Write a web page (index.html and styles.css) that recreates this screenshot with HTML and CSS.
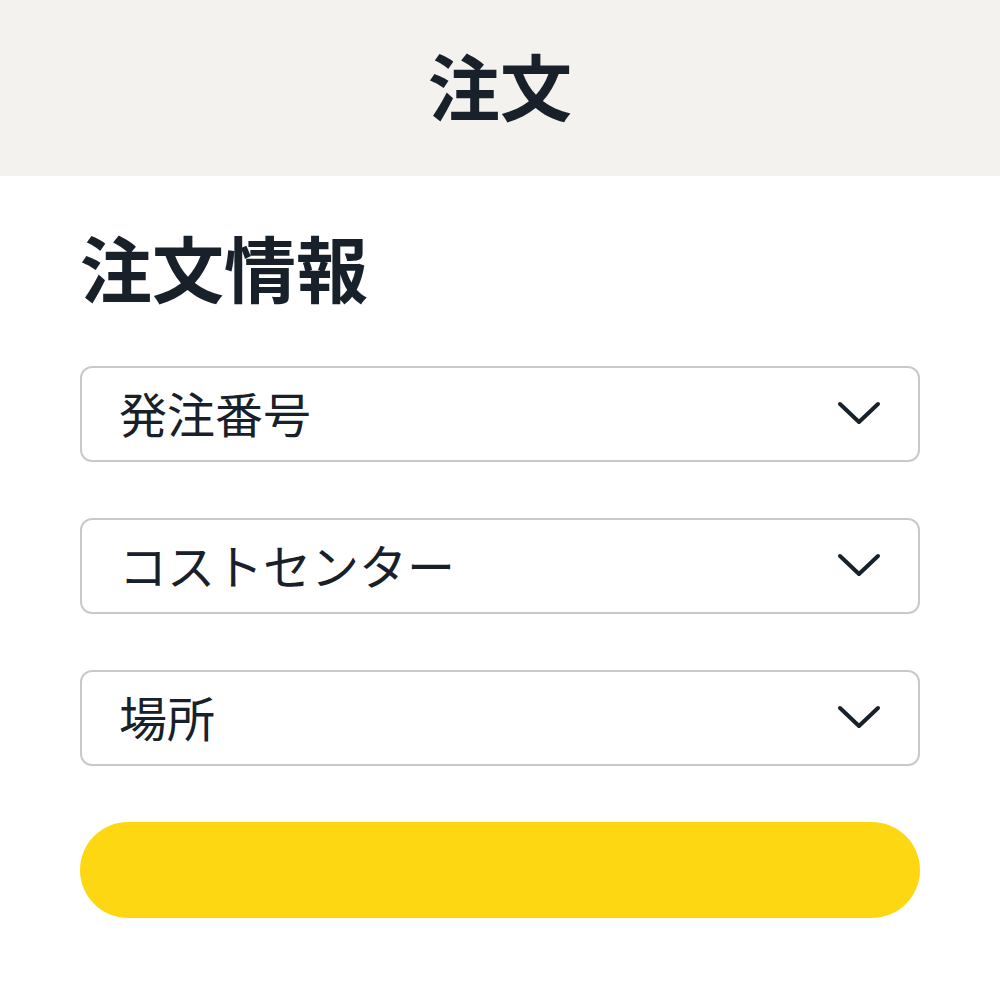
FILE: index.html
```html
<!DOCTYPE html>
<html>
<head>
  <title>注文</title>
  <link rel="stylesheet" href="styles.css">
</head>
<body>
  <div class="header">
    <h1>注文</h1>
  </div>
  <div class="order-container">
    <h2>注文情報</h2>
    <div class="select-box">
      <span>発注番号</span>
      <svg class="chevron" width="44" height="26" viewBox="0 0 44 26"><path d="M3 4 L22 22 L41 4" fill="none" stroke="#18202a" stroke-width="4" stroke-linecap="round" stroke-linejoin="round"/></svg>
    </div>
    <div class="select-box">
      <span>コストセンター</span>
      <svg class="chevron" width="44" height="26" viewBox="0 0 44 26"><path d="M3 4 L22 22 L41 4" fill="none" stroke="#18202a" stroke-width="4" stroke-linecap="round" stroke-linejoin="round"/></svg>
    </div>
    <div class="select-box">
      <span>場所</span>
      <svg class="chevron" width="44" height="26" viewBox="0 0 44 26"><path d="M3 4 L22 22 L41 4" fill="none" stroke="#18202a" stroke-width="4" stroke-linecap="round" stroke-linejoin="round"/></svg>
    </div>
    <button class="submit-button" type="button"></button>
  </div>
</body>
</html>
```

FILE: styles.css
```css
body {
  margin: 0;
  background-color: #ffffff;
  font-family: "Noto Sans CJK JP", "Noto Sans", sans-serif;
  color: #18202a;
}

.header {
  height: 176px;
  background-color: #f3f2ef;
  display: flex;
  justify-content: center;
  align-items: center;
}

.header h1 {
  margin: 0 0 8px 0;
  font-size: 72px;
  font-weight: 700;
  line-height: 1;
}

.order-container {
  padding: 0 80px;
  display: flex;
  flex-direction: column;
}

.order-container h2 {
  margin: 47px 0 57px 0;
  font-size: 72px;
  font-weight: 700;
  line-height: 86px;
}

.select-box {
  height: 96px;
  box-sizing: border-box;
  border: 2px solid #c9c9cd;
  border-radius: 12px;
  padding: 0 37px 0 37px;
  margin-bottom: 56px;
  display: flex;
  justify-content: space-between;
  align-items: center;
  font-size: 48px;
  line-height: 1;
}

.select-box span {
  padding-bottom: 5px;
}

.chevron {
  display: block;
  margin-bottom: 2px;
}

.submit-button {
  height: 96px;
  border: none;
  border-radius: 48px;
  background-color: #fdd712;
  cursor: pointer;
}
```
